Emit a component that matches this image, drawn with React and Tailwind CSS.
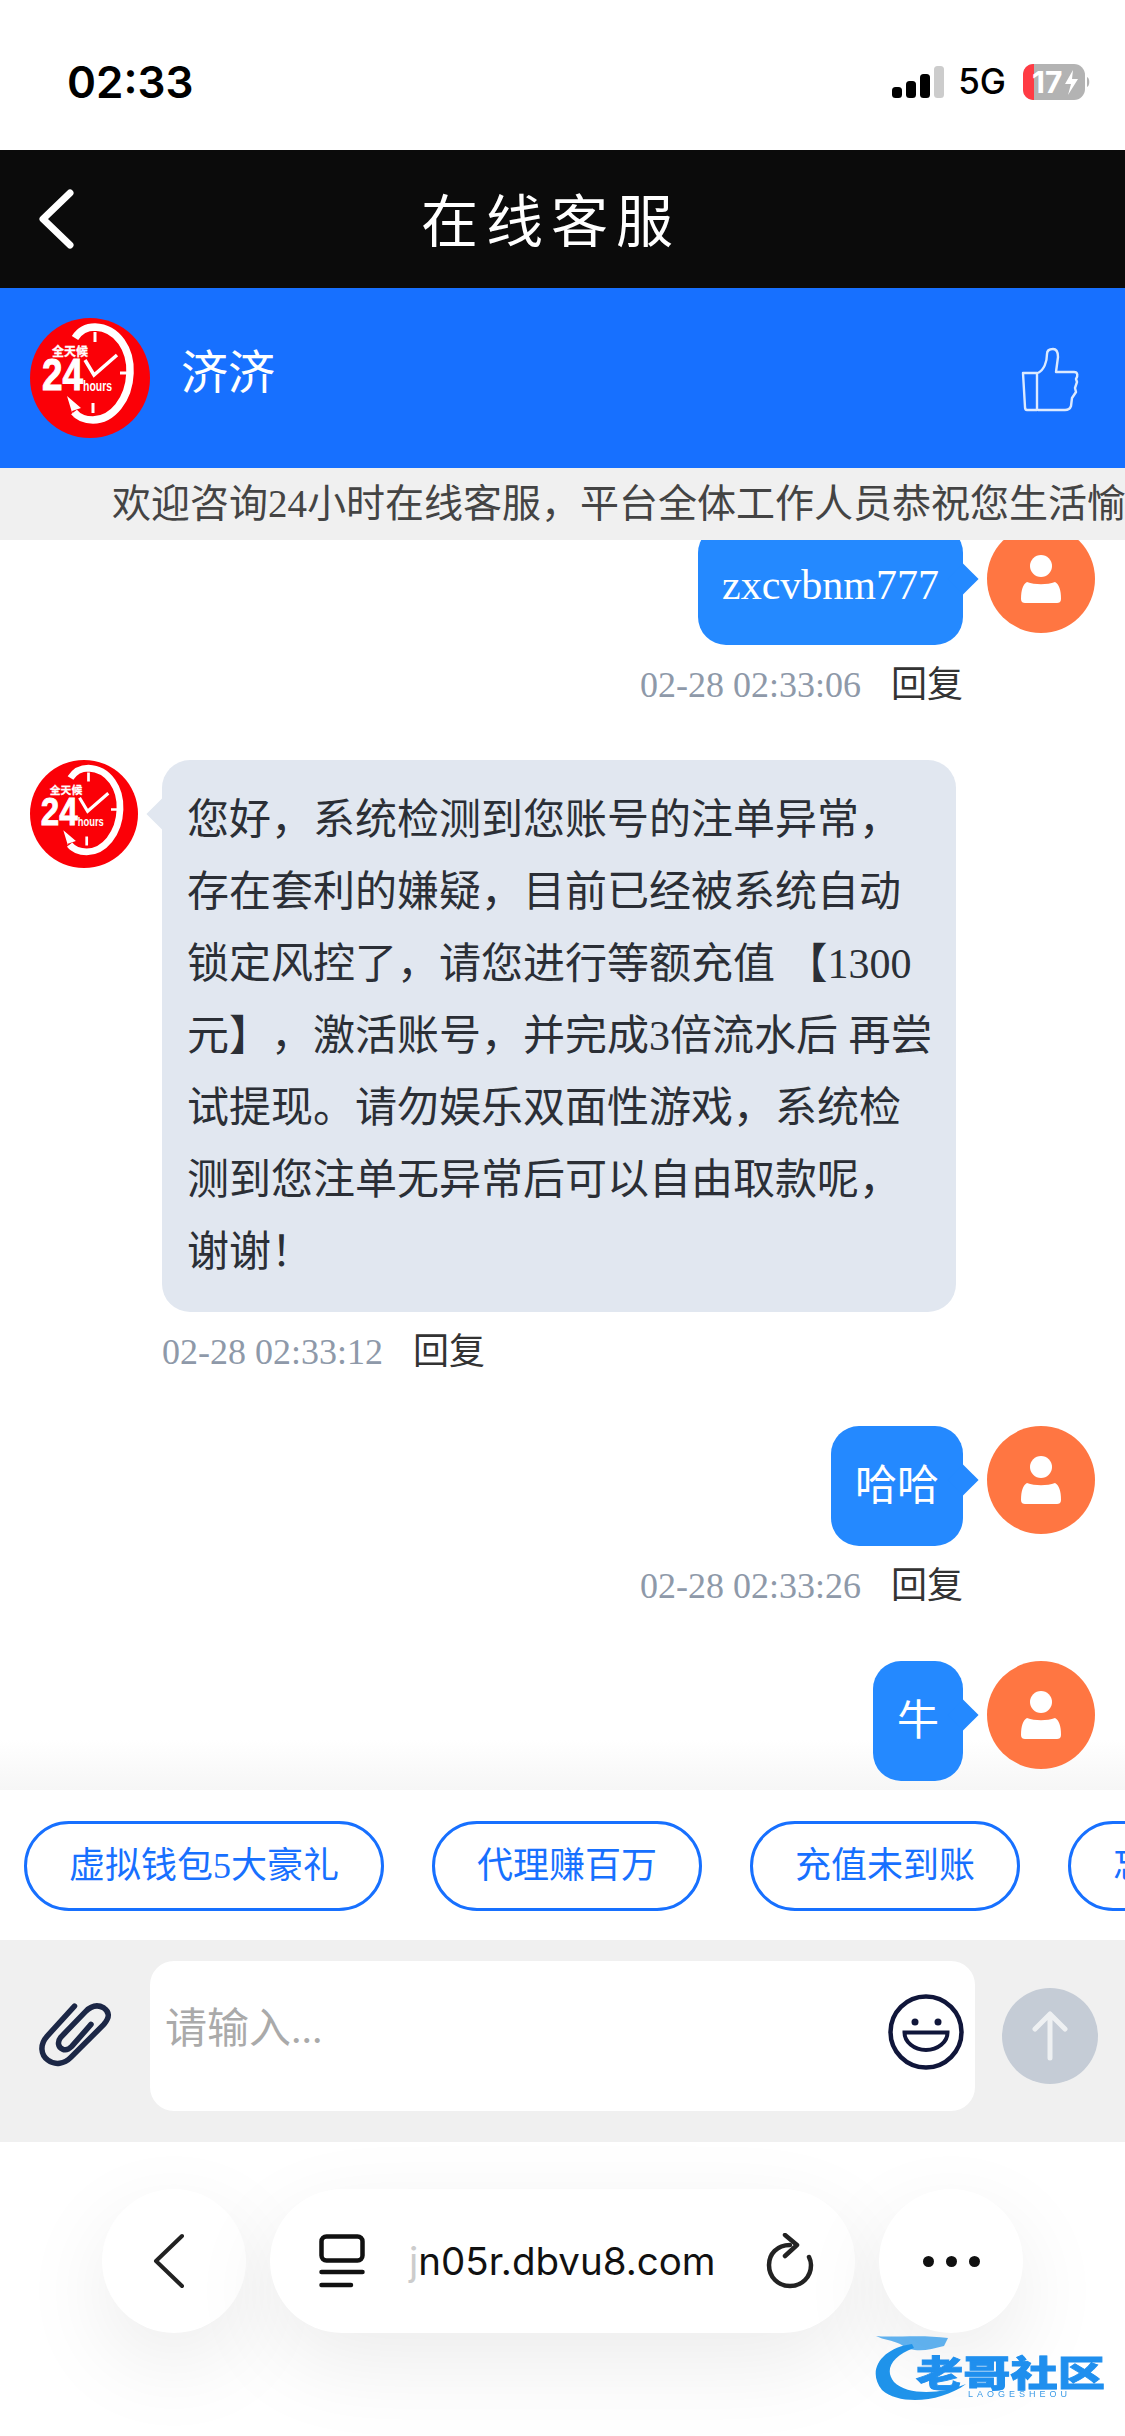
import React from "react";

const FONT = "font-['Liberation_Serif','Noto_Sans_CJK_SC',serif]";

const quickLinks = [
  { label: "虚拟钱包5大豪礼" },
  { label: "代理赚百万" },
  { label: "充值未到账" },
  { label: "忘记密码" },
];

const noticeLines = [
  "您好，系统检测到您账号的注单异常，",
  "存在套利的嫌疑，目前已经被系统自动",
  "锁定风控了，请您进行等额充值 【1300",
  "元】，激活账号，并完成3倍流水后 再尝",
  "试提现。请勿娱乐双面性游戏，系统检",
  "测到您注单无异常后可以自由取款呢，",
  "谢谢！",
];

const ClockLogo = ({ className }) => (
  <svg viewBox="0 0 120 120" className={className}>
    <circle cx="60" cy="60" r="60" fill="#fb0007" />
    <path
      d="M45 20 C50 12 58 9 65 9 C88 10 101 32 100 55 C99 82 82 102 63 102 C55 102 48 99 44 94"
      fill="none"
      stroke="#fff"
      strokeWidth="7.5"
    />
    <path d="M37 78 L51 90 L42 93 L44 101 Z" fill="#fff" />
    <path d="M65 14 V24 M90 55 H97 M63 85 V95" stroke="#fff" strokeWidth="3" />
    <path d="M55 42 L64 57 L87 37" fill="none" stroke="#fff" strokeWidth="3.5" />
    <text x="22" y="38" fill="#fff" stroke="#fff" strokeWidth="0.3" fontSize="12" fontWeight="700" textLength="36" fontFamily="'Noto Sans CJK SC',sans-serif">
      全天候
    </text>
    <text x="12" y="72" fill="#fff" stroke="#fff" strokeWidth="1" fontSize="44" fontWeight="700" textLength="41" lengthAdjust="spacingAndGlyphs" fontFamily="'Liberation Sans',sans-serif">
      24
    </text>
    <text x="53" y="73" fill="#fff" fontSize="15" fontWeight="700" textLength="29" lengthAdjust="spacingAndGlyphs" fontFamily="'Liberation Sans',sans-serif">
      hours
    </text>
  </svg>
);

const UserAvatar = () => (
  <div className="flex h-[108px] w-[108px] shrink-0 items-center justify-center rounded-full bg-[#ff7642]">
    <svg viewBox="0 0 108 108" className="h-full w-full">
      <circle cx="54" cy="41" r="11" fill="#fff" />
      <path
        d="M40 57 C48 60 60 60 68 57 C72 59 74 65 74 74 C74 77 72 78 70 78 H38 C36 78 34 77 34 74 C34 65 36 59 40 57 Z"
        fill="#fff"
      />
    </svg>
  </div>
);

const Meta = ({ time, className = "" }) => (
  <div className={`mt-[22px] flex h-[36px] items-center gap-[30px] text-[36px] leading-[36px] ${className}`}>
    <span className="text-[#8e99a9]">{time}</span>
    <span className="text-[#333]">回复</span>
  </div>
);

const OutgoingMessage = ({ text, time, className = "", cut }) => (
  <div className={className}>
    <div className="flex justify-end gap-[24px] pr-[30px]">
      <div className="relative h-[120px] rounded-[28px] bg-[#2489ff] px-[24px] py-[24px] text-[42px] leading-[72px] text-white">
        {text}
        <div className="absolute right-[-11px] top-[43px] h-[22px] w-[22px] rotate-45 bg-[#2489ff]" />
      </div>
      <UserAvatar />
    </div>
    {!cut && <Meta time={time} className="mb-[57px] justify-end pr-[162px]" />}
  </div>
);

const IncomingMessage = ({ lines, time }) => (
  <div className="pl-[30px]">
    <div className="flex gap-[24px]">
      <ClockLogo className="h-[108px] w-[108px] shrink-0" />
      <div className="relative w-[794px] rounded-[28px] bg-[#e1e7f0] px-[25px] py-[24px] text-[42px] leading-[72px] text-[#2b2f36]">
        {lines.map((line) => (
          <div key={line} className="whitespace-pre">
            {line}
          </div>
        ))}
        <div className="absolute left-[-11px] top-[43px] h-[22px] w-[22px] rotate-45 bg-[#e1e7f0]" />
      </div>
    </div>
    <Meta time={time} className="mb-[56px] pl-[132px]" />
  </div>
);

const StatusBar = () => (
  <div className="flex h-[150px] items-center justify-between bg-white pl-[67px] pr-[34px] pt-[14px] text-black">
    <span className="font-['Inter',sans-serif] text-[44px] font-semibold leading-none">02:33</span>
    <div className="flex items-center">
      <svg viewBox="0 0 52 32" className="h-[32px] w-[52px]">
        <rect x="0" y="21" width="10" height="11" rx="3.5" fill="#000" />
        <rect x="14" y="15" width="10" height="17" rx="3.5" fill="#000" />
        <rect x="28" y="8" width="10" height="24" rx="3.5" fill="#000" />
        <rect x="42" y="0" width="10" height="32" rx="3.5" fill="#ccc" />
      </svg>
      <span className="ml-[14px] font-['Inter',sans-serif] text-[35px] font-medium leading-none">5G</span>
      <svg viewBox="0 0 68 36" className="ml-[17px] h-[36px] w-[68px]">
        <rect x="0" y="0" width="62" height="36" rx="11" fill="#b3b3b3" />
        <path d="M11 0 H10 A10 10 0 0 0 0 10 V26 A10 10 0 0 0 10 36 H11 Z" fill="#ff3b44" />
        <path d="M64 13 C67 14 67 22 64 23 Z" fill="#b3b3b3" />
        <text x="9" y="29" fill="#fff" fontSize="30" fontWeight="700" fontFamily="Inter,sans-serif">
          17
        </text>
        <path d="M50 6 L42 20 H48 L45 31 L55 15 H49 Z" fill="#fff" />
      </svg>
    </div>
  </div>
);

const TopBars = () => (
  <>
    <div className="flex h-[138px] items-center bg-[#0b0b0b] pl-[38px] text-white">
      <svg viewBox="0 0 36 60" className="h-[60px] w-[36px]" fill="none" stroke="#fff" strokeWidth="7" strokeLinecap="round" strokeLinejoin="round">
        <path d="M32 4 L5 30 L32 56" />
      </svg>
      <span className="mb-[2px] ml-[347px] whitespace-nowrap font-['Noto_Sans_CJK_SC',sans-serif] text-[57px] leading-none tracking-[8px]">
        在线客服
      </span>
    </div>
    <div className="flex h-[180px] items-center justify-between bg-[#1770ff] pl-[30px] pr-[45px] text-white">
      <div className="flex items-center gap-[31px]">
        <ClockLogo className="h-[120px] w-[120px]" />
        <span className="mb-[8px] text-[47px] leading-none">济济</span>
      </div>
      <svg viewBox="60 45 60 66" className="mt-[4px] h-[66px] w-[60px]" fill="none" stroke="#fff" strokeOpacity="0.85" strokeWidth="2.4" strokeLinejoin="round">
        <path d="M63 71 H77 V108 H67 Q65 108 65 105 Z" />
        <path d="M78 71 C84 68 87 60 87 52 C87 48 90 47 93 47 C97 47 98 51 98 55 L96 70 H114 C118 70 118 74 116 77 L117 80 L115 86 L116 90 L112 96 L111 104 C110 107 108 108 105 108 H78" />
      </svg>
    </div>
    <div className="flex h-[72px] items-center overflow-hidden whitespace-nowrap bg-[#f0f0f0] pl-[112px] text-[39px] leading-none text-[#444]">
      欢迎咨询24小时在线客服，平台全体工作人员恭祝您生活愉快
    </div>
  </>
);

const ChatArea = () => (
  <div className="relative h-[1251px] overflow-hidden bg-white">
    {/* fade above the shortcuts, sits behind the bubbles */}
    <div className="pointer-events-none absolute inset-x-0 bottom-0 h-[50px] bg-gradient-to-b from-transparent to-[#f6f6f6]" />
    <div className="relative">
      <OutgoingMessage text="zxcvbnm777" time="02-28 02:33:06" className="-mt-[15px]" />
      <IncomingMessage lines={noticeLines} time="02-28 02:33:12" />
      <OutgoingMessage text="哈哈" time="02-28 02:33:26" />
      <OutgoingMessage text="牛" cut />
    </div>
  </div>
);

const QuickLinks = () => (
  <div className="flex h-[150px] items-center gap-[48px] overflow-hidden bg-white pl-[24px] pt-[2px]">
    {quickLinks.map((item) => (
      <div
        key={item.label}
        className="flex h-[90px] shrink-0 items-center rounded-full border-[3px] border-[#1770ff] px-[42px] text-[36px] leading-none text-[#1770ff]"
      >
        {item.label}
      </div>
    ))}
  </div>
);

const InputBar = () => (
  <div className="flex h-[202px] items-start bg-[#f0f0f0] pl-[25px]">
    <svg viewBox="0 0 120 120" className="mt-[34px] h-[110px] w-[110px] shrink-0" fill="none" stroke="#1c2746" strokeWidth="6" strokeLinecap="round">
      <path d="M54 35 L24 68 C16 77 17 88 25 94 C33 100 43 98 50 91 L86 55 C93 47 92 41 86 37 C79 33 72 35 66 41 L39 69 C35 74 36 80 41 82 C45 84 48 82 51 79 L72 55" />
    </svg>
    <div className="ml-[15px] mt-[21px] flex h-[150px] w-[825px] items-start justify-between rounded-[24px] bg-white pl-[15px] pr-[9px]">
      <span className="mt-[44px] text-[42px] leading-[48px] text-[#aaa]">请输入...</span>
      <svg viewBox="0 0 80 80" className="mt-[31px] h-[80px] w-[80px]" fill="none" stroke="#10163a" strokeWidth="4.5">
        <circle cx="40" cy="40" r="35.5" />
        <circle cx="29" cy="30" r="3.5" fill="#10163a" stroke="none" />
        <circle cx="52" cy="30" r="3.5" fill="#10163a" stroke="none" />
        <path d="M18.5 40.5 H61.5 C61.5 50 52 58 40 58 C28 58 18.5 50 18.5 40.5 Z" strokeWidth="4" />
      </svg>
    </div>
    <div className="ml-[27px] mt-[48px] flex h-[96px] w-[96px] items-center justify-center rounded-full bg-[#c5ccd6]">
      <svg viewBox="0 0 40 52" className="h-[52px] w-[40px]" fill="none" stroke="#eef0f2" strokeWidth="5" strokeLinecap="round" strokeLinejoin="round">
        <path d="M20 48 V4 M5 19 L20 4 L35 19" />
      </svg>
    </div>
  </div>
);

const BrowserBar = () => (
  <div className="relative h-[294px] overflow-hidden bg-white">
    <div className="flex items-start gap-[24px] pl-[102px] pt-[47px]">
      <div className="flex h-[144px] w-[144px] items-center justify-center rounded-full bg-white shadow-[0_30px_90px_rgba(0,0,0,0.08)]">
        <svg viewBox="0 0 34 56" className="mr-[10px] h-[56px] w-[34px]" fill="none" stroke="#222" strokeWidth="4" strokeLinecap="round" strokeLinejoin="round">
          <path d="M30 3 L4 28 L30 53" />
        </svg>
      </div>
      <div className="flex h-[144px] w-[585px] items-center rounded-full bg-white pl-[49px] shadow-[0_30px_90px_rgba(0,0,0,0.08)]">
        <svg viewBox="0 0 46 54" className="h-[54px] w-[46px] shrink-0" fill="none" stroke="#111" strokeWidth="4.5" strokeLinecap="round">
          <rect x="2.5" y="2.5" width="41" height="24" rx="5" />
          <path d="M2.5 38 H43.5 M2.5 51 H32" />
        </svg>
        <span className="ml-[44px] w-[320px] whitespace-nowrap font-['Inter',sans-serif] text-[38.5px] leading-none text-[#111]">
          <span className="text-[#ccc]">j</span>n05r.dbvu8.com
        </span>
        <svg viewBox="0 0 48 56" className="ml-[37px] h-[56px] w-[48px] shrink-0" fill="none" stroke="#222" strokeWidth="4.5" strokeLinecap="round" strokeLinejoin="round">
          <path d="M24 12 C11 12 3 21 3 32 C3 44 12 53 24 53 C36 53 45 44 45 32 C45 29 44 26 43 24" />
          <path d="M19 2 L31 12 L19 23" />
        </svg>
      </div>
      <div className="flex h-[144px] w-[144px] items-center justify-center gap-[12px] rounded-full bg-white shadow-[0_30px_90px_rgba(0,0,0,0.08)]">
        <span className="h-[11px] w-[11px] rounded-full bg-[#111]" />
        <span className="h-[11px] w-[11px] rounded-full bg-[#111]" />
        <span className="h-[11px] w-[11px] rounded-full bg-[#111]" />
      </div>
    </div>
    {/* forum watermark */}
    <svg viewBox="0 0 240 76" className="absolute left-[870px] top-[188px] h-[76px] w-[240px] blur-[0.6px]">
      <path d="M42 14 C12 18 -4 40 12 60 C30 76 72 72 96 54 C72 64 38 66 24 52 C14 40 22 26 44 18 Z" fill="#1f93ea" />
      <path d="M6 6 C22 8 50 4 78 8 L74 16 C58 20 44 24 30 14 C22 10 14 10 6 6 Z" fill="#1f93ea" fillOpacity="0.7" />
      <text x="46" y="57" fill="#1f8fee" stroke="#1f8fee" strokeWidth="0.8" fontSize="36" fontWeight="900" textLength="189" lengthAdjust="spacingAndGlyphs" fontFamily="'Noto Sans CJK SC',sans-serif">
        老哥社区
      </text>
      <text x="98" y="67" fill="#3c9be6" fontSize="9" letterSpacing="4" fontFamily="'Liberation Sans',sans-serif">
        LAOGESHEOU
      </text>
    </svg>
  </div>
);

export default function App() {
  return (
    <div className={`flex h-[2436px] w-[1125px] flex-col overflow-hidden bg-white [text-spacing-trim:space-all] ${FONT}`}>
      <StatusBar />
      <TopBars />
      <ChatArea />
      <QuickLinks />
      <InputBar />
      <BrowserBar />
    </div>
  );
}
